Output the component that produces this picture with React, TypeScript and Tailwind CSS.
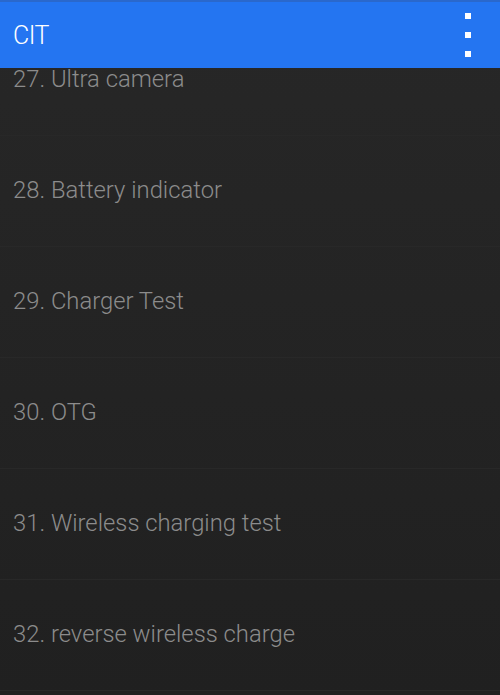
import React from "react";

const items = [
  "27. Ultra camera",
  "28. Battery indicator",
  "29. Charger Test",
  "30. OTG",
  "31. Wireless charging test",
  "32. reverse wireless charge",
];

export default function App() {
  return (
    <div
      className="w-[500px] h-[695px] overflow-hidden flex flex-col bg-gradient-to-b from-[#272727] to-[#202020]"
      style={{ fontFamily: "Roboto, 'Noto Sans', sans-serif" }}
    >
      <div className="relative z-10 h-[68px] shrink-0 bg-[#2475f1] border-t-2 border-[#2a68cc] flex items-center justify-between pl-[13px] pr-[29px]">
        <span className="text-white text-[25px] font-light tracking-[-0.5px] leading-none">CIT</span>
        <div className="flex flex-col gap-[13px]">
          <div className="w-[6px] h-[6px] bg-white" />
          <div className="w-[6px] h-[6px] bg-white" />
          <div className="w-[6px] h-[6px] bg-white" />
        </div>
      </div>
      <div className="-mt-[43px] flex flex-col">
        {items.map((t, i) => (
          <div
            key={i}
            className="h-[111px] shrink-0 flex items-center pl-[13px] border-b border-[#282828]"
          >
            <span className="text-[#8c8c8c] text-[23.8px] font-light leading-none">{t}</span>
          </div>
        ))}
      </div>
    </div>
  );
}
